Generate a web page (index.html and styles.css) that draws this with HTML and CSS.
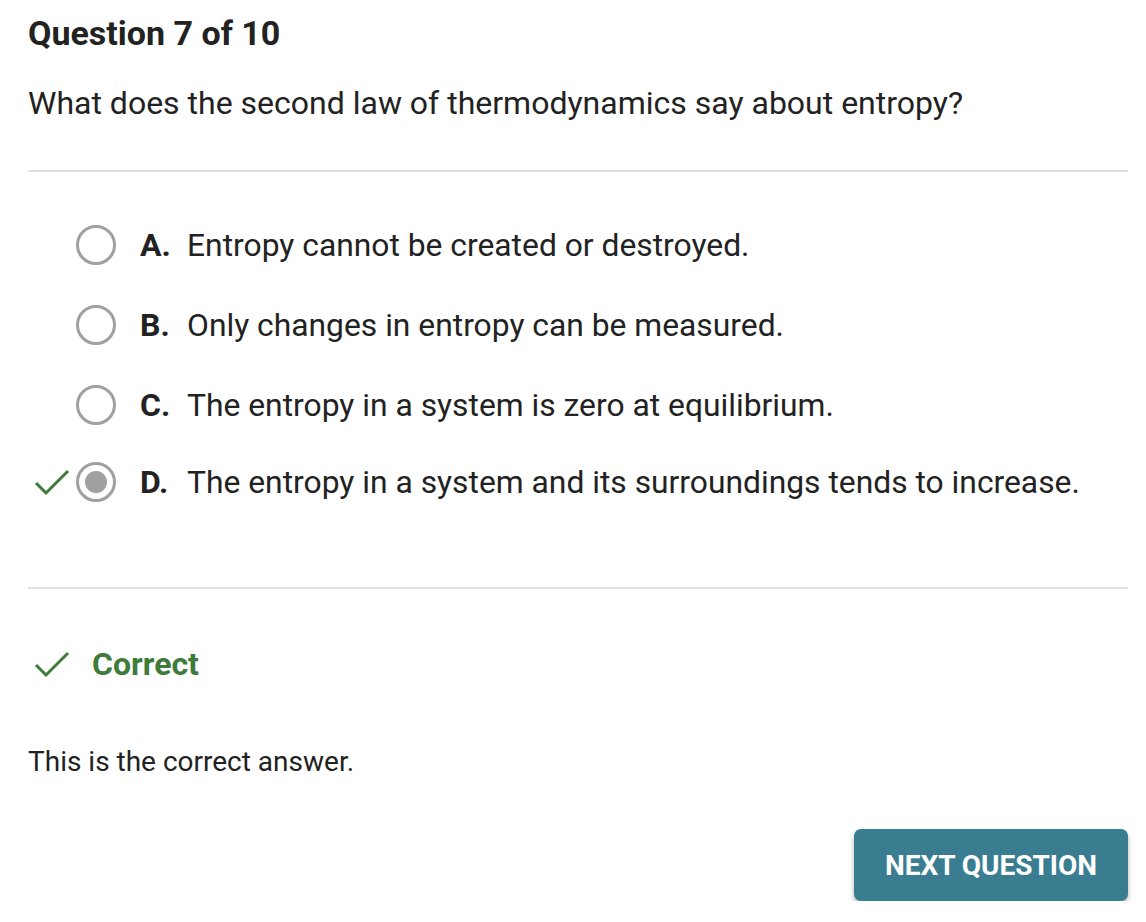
FILE: index.html
```html
<!DOCTYPE html>
<html lang="en">
<head>
<meta charset="utf-8">
<title>Question 7 of 10</title>
<link rel="stylesheet" href="styles.css">
</head>
<body>
<main class="quiz">
  <h1 class="quiz-title">Question 7 of 10</h1>
  <p class="quiz-question">What does the second law of thermodynamics say about entropy?</p>
  <hr class="divider">
  <ul class="options">
    <li class="option">
      <span class="mark"></span>
      <span class="radio"></span>
      <span class="letter">A.</span>
      <span class="text">Entropy cannot be created or destroyed.</span>
    </li>
    <li class="option">
      <span class="mark"></span>
      <span class="radio"></span>
      <span class="letter">B.</span>
      <span class="text">Only changes in entropy can be measured.</span>
    </li>
    <li class="option">
      <span class="mark"></span>
      <span class="radio"></span>
      <span class="letter">C.</span>
      <span class="text">The entropy in a system is zero at equilibrium.</span>
    </li>
    <li class="option option-selected">
      <span class="mark">
        <svg viewBox="0 0 36 28" width="36" height="28"><path d="M2 15 L12 25 L34 3" fill="none" stroke="#3f7b3a" stroke-width="3"/></svg>
      </span>
      <span class="radio radio-checked"></span>
      <span class="letter">D.</span>
      <span class="text">The entropy in a system and its surroundings tends to increase.</span>
    </li>
  </ul>
  <hr class="divider divider-bottom">
  <div class="result">
    <svg class="result-icon" viewBox="0 0 36 28" width="36" height="28"><path d="M2 15 L12 25 L34 3" fill="none" stroke="#3f7b3a" stroke-width="3"/></svg>
    <span class="result-label">Correct</span>
  </div>
  <p class="explanation">This is the correct answer.</p>
  <div class="actions">
    <button class="next-btn">NEXT QUESTION</button>
  </div>
</main>
</body>
</html>
```

FILE: styles.css
```css
* { box-sizing: border-box; }
html, body { margin: 0; padding: 0; background: #fff; }
body {
  font-family: Roboto, "Liberation Sans", sans-serif;
  color: #222;
}
.quiz {
  padding: 12px 18px 0 28px;
}
.quiz-title {
  margin: 0;
  font-size: 34px;
  font-weight: 700;
  line-height: 42px;
  color: #222;
}
.quiz-question {
  margin: 29px 0 0;
  font-size: 32px;
  line-height: 40px;
}
.divider {
  border: none;
  border-top: 2px solid #e0e0e0;
  margin: 47px 0 0;
}
.options {
  list-style: none;
  margin: 0;
  padding: 33px 0 0;
}
.option {
  display: flex;
  align-items: center;
  height: 80px;
}
.option-selected { height: 78px; margin-top: -2px; }
.mark {
  width: 48px;
  display: flex;
  justify-content: flex-start;
  padding-left: 6px;
}
.radio {
  width: 40px;
  height: 40px;
  border-radius: 50%;
  border: 3px solid #a0a0a0;
  flex: none;
  position: relative;
}
.radio-checked::after {
  content: "";
  position: absolute;
  left: 50%;
  top: 50%;
  width: 22px;
  height: 22px;
  margin: -11px 0 0 -11px;
  border-radius: 50%;
  background: #a0a0a0;
}
.letter {
  font-size: 32px;
  font-weight: 700;
  margin-left: 24px;
  width: 47px;
}
.text {
  font-size: 31.8px;
}
.divider-bottom { margin-top: 66px; }
.result {
  display: flex;
  align-items: center;
  margin-top: 56px;
  padding-left: 6px;
}
.result-icon { flex: none; }
.result-label {
  margin-left: 22px;
  font-size: 32px;
  font-weight: 700;
  color: #3f7b3a;
}
.explanation {
  margin: 61px 0 0;
  font-size: 28px;
  line-height: 36px;
}
.actions {
  display: flex;
  justify-content: flex-end;
  margin-top: 49px;
}
.next-btn {
  width: 274px;
  height: 72px;
  border: none;
  border-radius: 7px;
  background: #3a7d91;
  color: #fff;
  font-family: Roboto, "Liberation Sans", sans-serif;
  font-size: 28px;
  font-weight: 700;
  box-shadow: 0 3px 5px rgba(0,0,0,0.3);
}
```
